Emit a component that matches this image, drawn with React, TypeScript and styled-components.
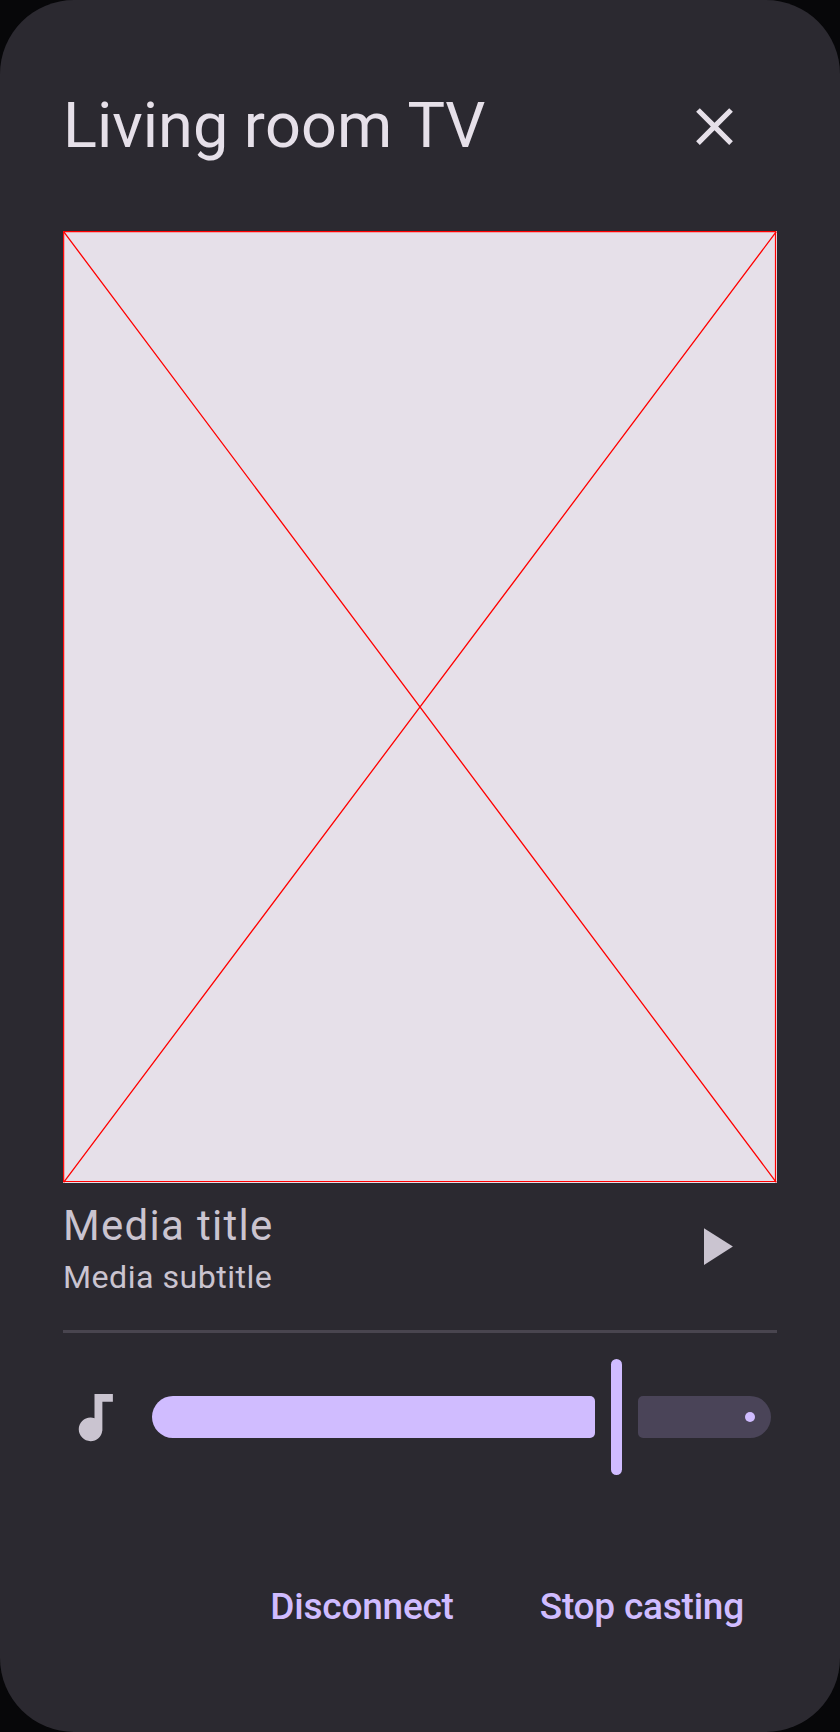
import React from 'react';
import styled, { createGlobalStyle } from 'styled-components';

const Global = createGlobalStyle`
  *{box-sizing:border-box}
  body{margin:0;background:#070709;font-family:Roboto,sans-serif}
`;
const Dialog = styled.main`
  width:840px;height:1732px;border-radius:74px;background:#2b2930;
  padding:84px 63px 0 63px;display:flex;flex-direction:column;overflow:hidden;
`;
const Header = styled.header`
  height:84px;display:flex;align-items:center;justify-content:space-between;padding-right:31px;
`;
const Title = styled.h1`
  margin:0;font-size:63px;line-height:84px;font-weight:400;color:#e6e0e9;white-space:nowrap;font-kerning:none;word-spacing:-.2px;
`;
const CloseIcon = styled.svg`
  margin-top:1px;
`;
const Artwork = styled.div`
  margin-top:63px;height:952px;background:#e6e0e9;flex:none;
  svg{display:block}
`;
const MediaRow = styled.section`
  height:147px;display:flex;justify-content:space-between;padding:11px 31px 0 0;
`;
const MediaTitle = styled.div`
  font-size:42px;line-height:64px;letter-spacing:1.3px;color:#cac4d0;
`;
const MediaSubtitle = styled.div`
  margin-top:-2px;font-size:32.2px;line-height:42px;letter-spacing:.46px;color:#cac4d0;
`;
const PlayIcon = styled.svg`
  margin-top:21px;
`;
const Divider = styled.div`
  height:3px;background:#49454f;flex:none;
`;
const VolumeRow = styled.section`
  height:168px;display:flex;align-items:center;padding:0 6px 0 0;
`;
const NoteIcon = styled.svg`
  margin-right:26px;
`;
const ActiveTrack = styled.div`
  width:443px;height:42px;background:#d0bcff;border-radius:21px 5px 5px 21px;
`;
const Handle = styled.div`
  width:11px;height:116px;border-radius:6px;background:#d0bcff;margin:0 15.5px 0 16px;
`;
const InactiveTrack = styled.div`
  width:133.5px;height:42px;background:#4a4458;border-radius:5px 21px 21px 5px;
  display:flex;align-items:center;justify-content:flex-end;padding-right:15.75px;
`;
const Stop = styled.i`
  width:10.5px;height:10.5px;border-radius:50%;background:#d0bcff;
`;
const Actions = styled.footer`
  display:flex;justify-content:flex-end;gap:86px;margin-top:79px;padding-right:33px;
`;
const Action = styled.button`
  border:0;padding:0;background:none;font:500 37px/53px Roboto,sans-serif;letter-spacing:-.22px;color:#d0bcff;
`;

export default function App() {
  return (
    <>
      <Global />
      <Dialog>
        <Header>
          <Title>Living room TV</Title>
          <CloseIcon width="63" height="63" viewBox="0 0 24 24" fill="#e6e0e9"><path d="M6.4 19 5 17.6l5.6-5.6L5 6.4 6.4 5l5.6 5.6L17.6 5 19 6.4 13.4 12l5.6 5.6-1.4 1.4-5.6-5.6z" /></CloseIcon>
        </Header>
        <Artwork>
          <svg width="714" height="952" fill="none" stroke="#f00" strokeWidth="1.31"><path d="M.65 .65H712.5V950.5H.65Z" strokeWidth="1.2" /><path d="M.65 .65L713.3 951.3M713.3 .65L.65 951.3" /></svg>
        </Artwork>
        <MediaRow>
          <div><MediaTitle>Media title</MediaTitle><MediaSubtitle>Media subtitle</MediaSubtitle></div>
          <PlayIcon width="63" height="63" viewBox="0 0 24 24" fill="#cac4d0"><path d="M8 5v14l11-7z" /></PlayIcon>
        </MediaRow>
        <Divider />
        <VolumeRow>
          <NoteIcon width="63" height="63" viewBox="0 0 24 24" fill="#cac4d0"><path d="M12 3v9.28c-.47-.17-.97-.28-1.5-.28C8.01 12 6 14.01 6 16.5S8.01 21 10.5 21c2.31 0 4.2-1.75 4.45-4H15V6h4V3z" /></NoteIcon>
          <ActiveTrack />
          <Handle />
          <InactiveTrack><Stop /></InactiveTrack>
        </VolumeRow>
        <Actions><Action>Disconnect</Action><Action>Stop casting</Action></Actions>
      </Dialog>
    </>
  );
}
